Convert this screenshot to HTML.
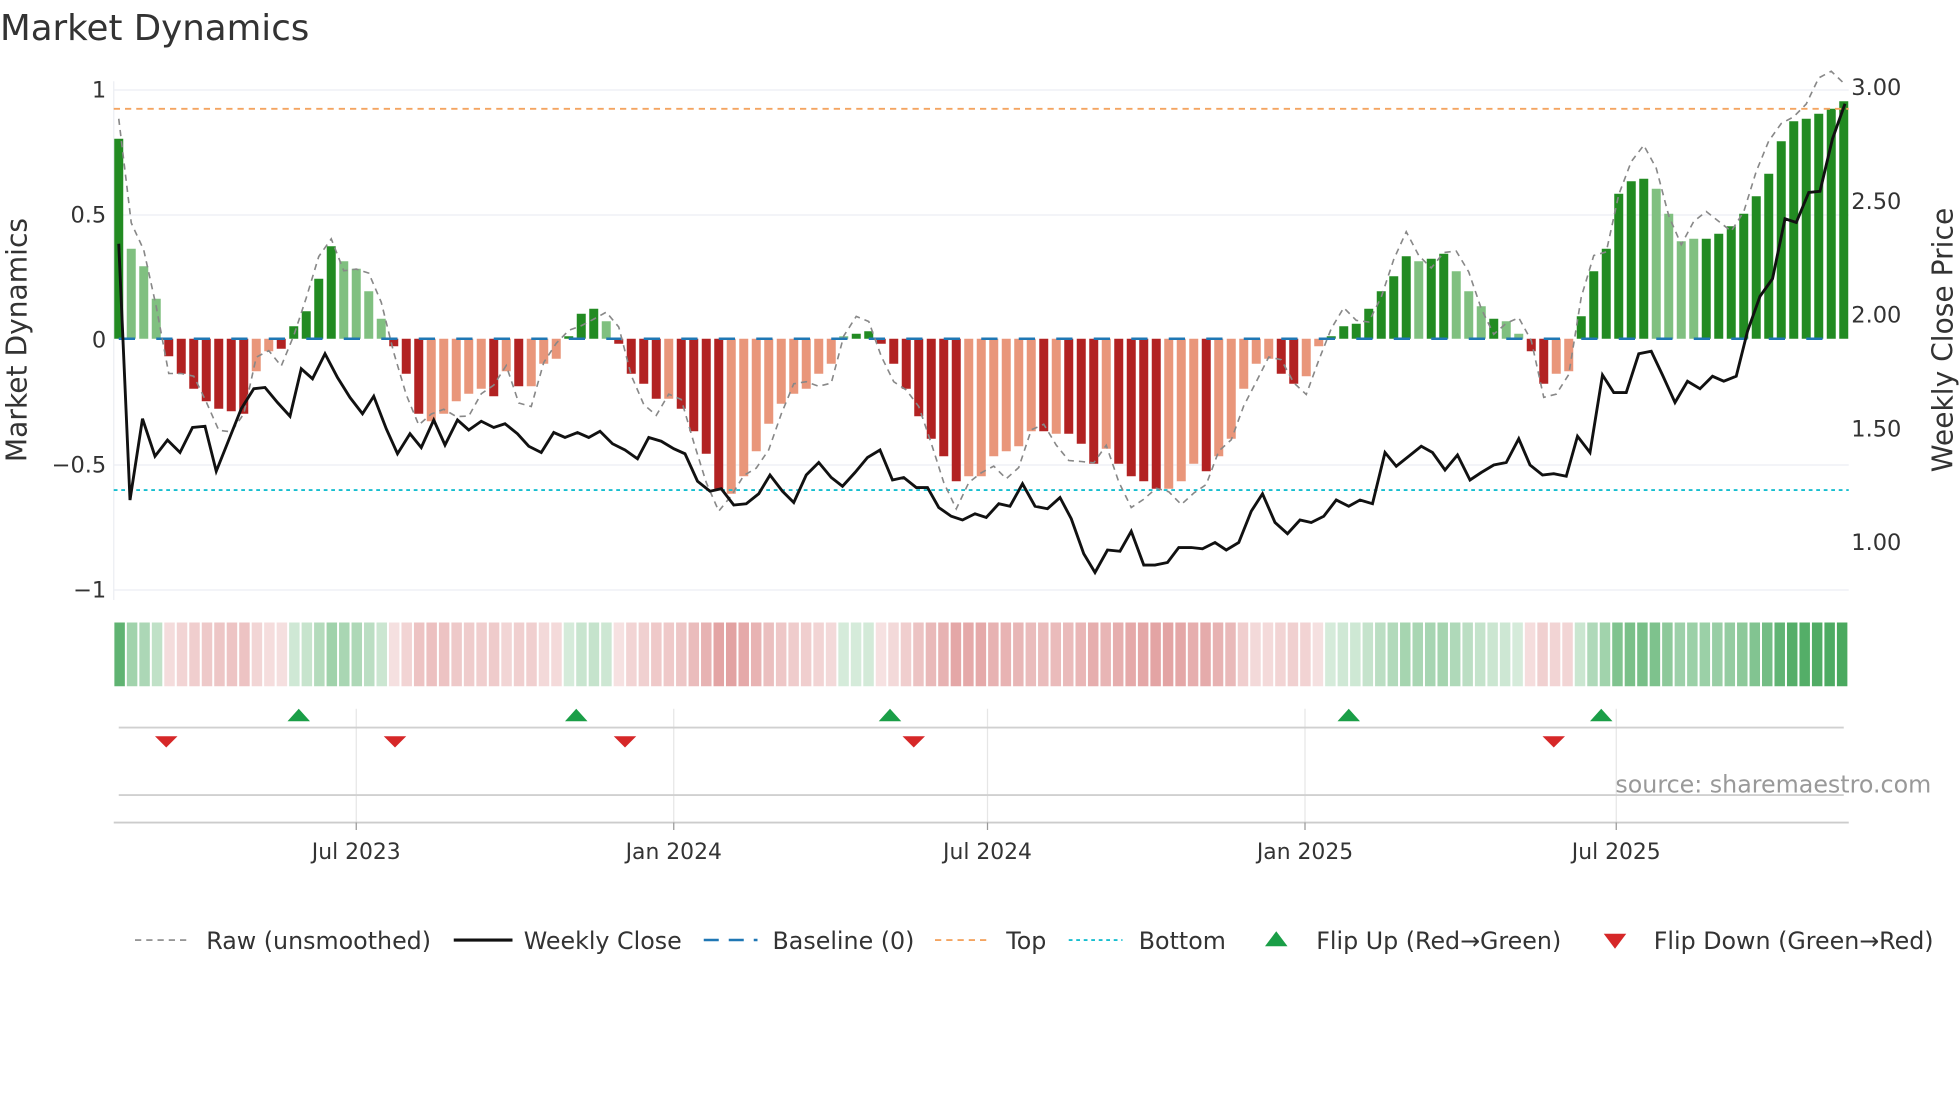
<!DOCTYPE html>
<html><head><meta charset="utf-8"><style>
html,body{margin:0;padding:0;background:#fff;}
svg{display:block;font-family:"DejaVu Sans","Liberation Sans",sans-serif;}
</style></head><body>
<svg id="s" width="1960" height="1102" viewBox="0 0 1568 881.6" xmlns="http://www.w3.org/2000/svg">
<rect width="1568" height="882" fill="#fff"/>
<text x="0" y="32" font-size="28.5" fill="#333">Market Dynamics</text>
<g stroke="#eceef3" stroke-width="1">
<line x1="91" y1="72" x2="1479" y2="72"/><line x1="91" y1="172" x2="1479" y2="172"/>
<line x1="91" y1="372" x2="1479" y2="372"/><line x1="91" y1="472" x2="1479" y2="472"/>
<line x1="91" y1="65" x2="91" y2="480"/>
</g>
<g id="bars"></g><g id="base"></g>
<line x1="91" y1="87" x2="1479" y2="87" stroke="#f4a460" stroke-width="1.5" stroke-dasharray="5,4"/>
<line x1="91" y1="392" x2="1479" y2="392" stroke="#17becf" stroke-width="1.5" stroke-dasharray="3,3"/>
<polyline id="raw" fill="none" stroke="#888" stroke-width="1.3" stroke-dasharray="5,4"/>
<polyline id="close" fill="none" stroke="#111" stroke-width="2.3"/>
<g font-size="18" fill="#333" text-anchor="end">
<text x="85" y="78">1</text><text x="85" y="178">0.5</text><text x="85" y="278">0</text><text x="85" y="378">−0.5</text><text x="85" y="478">−1</text>
</g>
<g font-size="18" fill="#333">
<text x="1481" y="76">3.00</text><text x="1481" y="167">2.50</text><text x="1481" y="258">2.00</text><text x="1481" y="349">1.50</text><text x="1481" y="440">1.00</text>
</g>
<text transform="translate(21,272) rotate(-90)" font-size="22.5" fill="#333" text-anchor="middle">Market Dynamics</text>
<text transform="translate(1562,272) rotate(-90)" font-size="22.5" fill="#333" text-anchor="middle">Weekly Close Price</text>
<g id="heat"></g>
<g stroke="#e6e6e6" stroke-width="1">
<line x1="285" y1="567" x2="285" y2="658"/><line x1="539" y1="567" x2="539" y2="658"/><line x1="790" y1="567" x2="790" y2="658"/><line x1="1044" y1="567" x2="1044" y2="658"/><line x1="1293" y1="567" x2="1293" y2="658"/>
</g>
<line x1="95" y1="582" x2="1475" y2="582" stroke="#d0d0d0" stroke-width="1.5"/>
<line x1="95" y1="636" x2="1475" y2="636" stroke="#d0d0d0" stroke-width="1.5"/>
<line x1="91" y1="658" x2="1479" y2="658" stroke="#ccc" stroke-width="1.5"/>
<g stroke="#999" stroke-width="1"><line x1="285" y1="658" x2="285" y2="664"/><line x1="539" y1="658" x2="539" y2="664"/><line x1="790" y1="658" x2="790" y2="664"/><line x1="1044" y1="658" x2="1044" y2="664"/><line x1="1293" y1="658" x2="1293" y2="664"/></g>
<g id="flips"></g>
<g font-size="17.5" fill="#333" text-anchor="middle">
<text x="285" y="687">Jul 2023</text><text x="539" y="687">Jan 2024</text><text x="790" y="687">Jul 2024</text><text x="1044" y="687">Jan 2025</text><text x="1293" y="687">Jul 2025</text>
</g>
<text x="1545" y="634" font-size="19" fill="#999" text-anchor="end">source: sharemaestro.com</text>
<g font-size="19" fill="#333">
<line x1="108" y1="752" x2="152" y2="752" stroke="#888" stroke-width="1.3" stroke-dasharray="5,4"/><text x="165" y="759">Raw (unsmoothed)</text>
<line x1="363" y1="752" x2="410" y2="752" stroke="#111" stroke-width="2.5"/><text x="419" y="759">Weekly Close</text>
<line x1="563" y1="752" x2="606" y2="752" stroke="#1f77b4" stroke-width="2" stroke-dasharray="12,8"/><text x="618" y="759">Baseline (0)</text>
<line x1="748" y1="752" x2="792" y2="752" stroke="#f4a460" stroke-width="1.5" stroke-dasharray="5,4"/><text x="805" y="759">Top</text>
<line x1="855" y1="752" x2="898" y2="752" stroke="#17becf" stroke-width="1.5" stroke-dasharray="3,3"/><text x="911" y="759">Bottom</text>
<polygon points="1012,757 1030,757 1021,745" fill="#1a9e47"/><text x="1053" y="759">Flip Up (Red→Green)</text>
<polygon points="1283,747 1301,747 1292,759" fill="#d62728"/><text x="1323" y="759">Flip Down (Green→Red)</text>
</g>
</svg>
<script>
var D="0.8d .36l .29l .16l -.07d -.14d -.2d -.25d -.28d -.29d -.3d -.13l -.05l -.04d .05d .11d .24d .37d .31l .28l .19l .08l -.03d -.14d -.3d -.33l -.3l -.25l -.22l -.2l -.23d -.13l -.19d -.19l -.1l -.08l .01d .1d .12d .07l -.02d -.14d -.18d -.24d -.24l -.28d -.37d -.46d -.6d -.62l -.55l -.45l -.34l -.26l -.22l -.2l -.14l -.1l .01l .02d .03d -.02d -.1d -.2d -.31d -.4d -.47d -.57d -.55l -.55l -.47l -.45l -.43l -.37l -.37d -.38l -.38d -.42d -.5d -.44l -.5d -.55d -.57d -.6d -.6l -.57l -.5l -.53d -.47l -.4l -.2l -.1l -.08l -.14d -.18d -.15l -.03l .01d .05d .06d .12d .19d .25d .33d .31l .32d .34d .27l .19l .13l .08d .07l .02l -.05d -.18d -.14l -.13l .09d .27d .36d .58d .63d .64d .6l .5l .39l .4l .4d .42d .45d .5d .57d .66d .79d .87d .88d .9d .92d .95d".split(" ");
var N=D.length,x0=95,x1=1475,st=(x1-x0)/(N-1),bw=st*0.72,ns="http://www.w3.org/2000/svg";
function el(t,a,p){var e=document.createElementNS(ns,t);for(var k in a)e.setAttribute(k,a[k]);p.appendChild(e);return e;}
var B=document.getElementById("bars"),H=document.getElementById("heat"),raw=[];
for(var i=0;i<N;i++){var v=parseFloat(D[i]),d=D[i].slice(-1)=="d",cx=x0+i*st;
var c=v>=0?(d?"#228b22":"#80c080"):(d?"#b22222":"#e9967a");
var y=271-v*200;el("rect",{x:cx-bw/2,y:Math.min(y,271),width:bw,height:Math.abs(v*200),fill:c},B);
var a=Math.min(1,0.2+Math.abs(v)*0.75);
var hc=v>=0?"rgba(34,150,60,"+(a*0.9)+")":"rgba(195,60,60,"+(a*0.72)+")";
el("rect",{x:91+i*(1388/N)+0.5,y:498,width:1388/N-1.6,height:51,fill:hc},H);
raw.push(cx+","+(271-(v*1.1+Math.sin(i*1.3)*0.07)*200).toFixed(1));}
document.getElementById("raw").setAttribute("points",raw.join(" "));
var G=document.getElementById("base");for(var x=95;x<1475;x+=30)el("line",{x1:x,y1:271,x2:x+13,y2:271,stroke:"#1f77b4","stroke-width":2},G);
var C="95,195 104,400 114,335 124,365 134,352 144,362 154,342 164,341 173,377 183,352 193,327 203,311 212,310 222,322 232,333 241,295 250,303 260,283 270,302 280,318 290,331 299,317 309,343 318,363 328,347 337,358 347,336 356,356 366,336 375,344 385,337 395,342 404,339 414,347 423,357 433,362 443,346 452,350 462,346 471,350 480,345 490,355 500,360 510,367 519,350 529,353 539,359 548,363 558,385 568,393 577,391 587,404 597,403 607,395 616,380 626,393 635,402 645,380 655,370 665,382 674,389 684,378 694,366 704,360 714,384 723,382 733,390 742,390 751,406 761,413 770,416 780,411 789,414 799,403 808,405 818,387 828,405 838,407 848,398 857,415 867,443 876,458 886,440 896,441 905,425 915,452 924,452 934,450 943,438 953,438 962,439 972,434 981,440 991,434 1001,409 1010,395 1020,418 1030,427 1040,416 1049,418 1059,413 1069,400 1079,405 1088,400 1098,403 1108,362 1117,373 1127,365 1137,357 1146,362 1156,376 1166,364 1176,384 1185,378 1195,372 1205,370 1215,351 1224,372 1234,380 1243,379 1253,381 1262,349 1272,362 1282,300 1291,314 1301,314 1311,283 1321,281 1330,300 1340,322 1350,305 1360,311 1370,301 1379,305 1389,301 1398,265 1408,237 1418,223 1428,175 1437,178 1447,154 1456,153 1466,111 1476,83";
document.getElementById("close").setAttribute("points",C);
var F=document.getElementById("flips");
[239,461,712,1079,1281].forEach(function(x){el("polygon",{points:(x-9)+",577 "+(x+9)+",577 "+x+",567",fill:"#1a9e47"},F);});
[133,316,500,731,1243].forEach(function(x){el("polygon",{points:(x-9)+",589 "+(x+9)+",589 "+x+",598",fill:"#d62728"},F);});
</script>
</body></html>
